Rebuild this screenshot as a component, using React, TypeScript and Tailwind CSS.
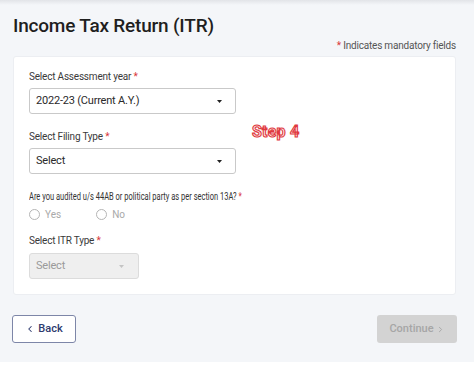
import { ChevronLeft, ChevronRight } from 'lucide-react'

function Caret({ muted = false }: { muted?: boolean }) {
  return (
    <svg width="5" height="3" viewBox="0 0 5 3" className="shrink-0">
      <path d="M0 0h5L2.5 3z" fill={muted ? '#c4c4c4' : '#222'} />
    </svg>
  )
}

function Label({ text }: { text: string }) {
  return (
    <p className="text-[10px] leading-none tracking-[-0.2px] text-[#3a3a3a]">
      {text} <span className="text-[#d9383a]">*</span>
    </p>
  )
}

function Radio({ label }: { label: string }) {
  return (
    <div className="flex items-center gap-[5px]">
      <span className="h-[11px] w-[11px] rounded-full border border-[#b5b5b5] bg-white" />
      <span className="text-[10px] leading-none text-[#a9a9a9]">{label}</span>
    </div>
  )
}

export default function App() {
  return (
    <div
      className="flex h-[365px] w-[474px] flex-col bg-[#f4f6f9] text-[#222]"
      style={{ fontFamily: 'Roboto, "Liberation Sans", sans-serif' }}
    >
      <div className="h-[5px] shrink-0 bg-gradient-to-b from-[#e2e4e8] to-[#f4f6f9]" />

      <div className="flex flex-1 flex-col pl-[13px] pr-[18px]">
        <h1 className="mt-[10px] text-[19px] font-medium leading-[22px] tracking-[-0.2px] text-[#1f1f1f]">
          Income Tax Return (ITR)
        </h1>
        <p className="mt-[3px] text-right text-[10px] leading-[12px] tracking-[-0.2px] text-[#555]">
          <span className="text-[#d9383a]">*</span> Indicates mandatory fields
        </p>

        {/* form card */}
        <div className="relative mt-[4px] flex flex-col rounded-[3px] border border-[#eceef2] bg-white px-[15px] pb-[15px] pt-[15px]">
          <Label text="Select Assessment year" />
          <div className="mt-[6px] flex h-[26px] w-[207px] items-center justify-between rounded-[3px] border border-[#c9c9c9] px-[6px] pr-[13px]">
            <span className="text-[11px] tracking-[-0.2px] text-[#2a2a2a]">2022-23 (Current A.Y.)</span>
            <Caret />
          </div>

          <div className="mt-[18px]">
            <Label text="Select Filing Type" />
          </div>
          <div className="mt-[6px] flex h-[26px] w-[207px] items-center justify-between rounded-[3px] border border-[#c9c9c9] px-[6px] pr-[13px]">
            <span className="text-[11px] tracking-[-0.2px] text-[#2a2a2a]">Select</span>
            <Caret />
          </div>

          <p className="mt-[18px] w-[320px] origin-left scale-x-[0.75] whitespace-nowrap text-[10px] leading-none text-[#333]">
            Are you audited u/s 44AB or political party as per section 13A? <span className="text-[#d9383a]">*</span>
          </p>
          <div className="mt-[7px] flex gap-[35px]">
            <Radio label="Yes" />
            <Radio label="No" />
          </div>

          <div className="mt-[16px]">
            <Label text="Select ITR Type" />
          </div>
          <div className="mt-[7px] flex h-[26px] w-[110px] items-center justify-between rounded-[3px] border border-[#dcdcdc] bg-[#efefef] px-[6px] pr-[14px]">
            <span className="text-[11px] tracking-[-0.2px] text-[#9a9a9a]">Select</span>
            <Caret muted />
          </div>

          {/* annotation overlay */}
          <span className="absolute left-[238px] top-[67px] text-[16px] font-bold leading-none tracking-[0.2px] text-[#fde9e9] [-webkit-text-stroke:1.1px_#e0393e]">
            Step 4
          </span>
        </div>

        <div className="mt-[20px] flex items-center justify-between">
          <button className="-ml-[1px] flex h-[28px] w-[64px] items-center justify-center gap-[3px] rounded-[3px] border border-[#7d86a8] bg-white text-[11px] font-medium text-[#2d3a6e]">
            <ChevronLeft size={10} strokeWidth={2.5} />
            Back
          </button>
          <button className="-mr-[1px] flex h-[28px] w-[80px] items-center justify-center gap-[2px] rounded-[3px] bg-[#d3d3d3] text-[11px] font-medium text-[#a6a6a6]">
            Continue
            <ChevronRight size={9} strokeWidth={2.5} />
          </button>
        </div>
      </div>
      <div className="h-[3px] shrink-0 bg-white" />
    </div>
  )
}
